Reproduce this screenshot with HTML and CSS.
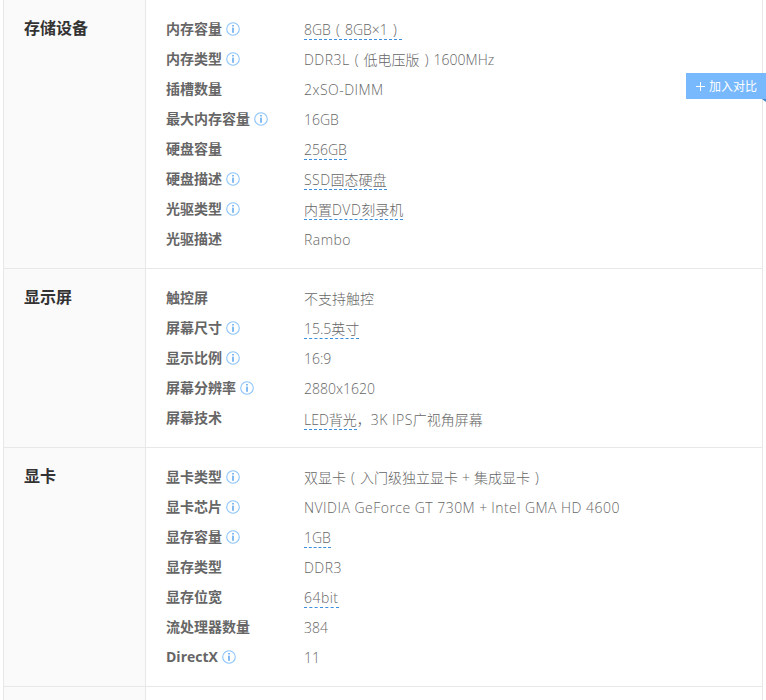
FILE: index.html
```html
<!DOCTYPE html>
<html lang="zh">
<head>
<meta charset="utf-8">
<title>参数</title>
<link rel="stylesheet" href="styles.css">
</head>
<body>
<svg class="defs" width="0" height="0"><symbol id="info" viewBox="0 0 14 14"><circle cx="7" cy="7" r="6.3" fill="none" stroke="#8cc4fb" stroke-width="1.1"/><rect x="6.3" y="3" width="1.4" height="1.5" fill="#4d9fef"/><rect x="6.3" y="5.6" width="1.4" height="5.2" fill="#4d9fef"/></symbol></svg>
<main class="table">
  <section class="group">
    <h2 class="title">存储设备</h2>
    <dl class="rows">
      <div class="row"><dt>内存容量<svg class="i"><use href="#info"/></svg></dt><dd><span class="link">8GB<span class="pa">(</span>8GB×1<span class="pa">)</span></span></dd></div>
      <div class="row"><dt>内存类型<svg class="i"><use href="#info"/></svg></dt><dd><span class="w">DDR3L</span><span class="pa">(</span>低电压版<span class="pa">)</span>1600MHz</dd></div>
      <div class="row"><dt>插槽数量</dt><dd><span class="w">2xSO-DIMM</span></dd></div>
      <div class="row"><dt>最大内存容量<svg class="i"><use href="#info"/></svg></dt><dd>16GB</dd></div>
      <div class="row"><dt>硬盘容量</dt><dd><span class="link">256GB</span></dd></div>
      <div class="row"><dt>硬盘描述<svg class="i"><use href="#info"/></svg></dt><dd><span class="link"><span class="w">SSD</span>固态硬盘</span></dd></div>
      <div class="row"><dt>光驱类型<svg class="i"><use href="#info"/></svg></dt><dd><span class="link">内置<span class="w">DVD</span>刻录机</span></dd></div>
      <div class="row"><dt>光驱描述</dt><dd><span class="w">Rambo</span></dd></div>
    </dl>
  </section>
  <section class="group">
    <h2 class="title">显示屏</h2>
    <dl class="rows">
      <div class="row"><dt>触控屏</dt><dd>不支持触控</dd></div>
      <div class="row"><dt>屏幕尺寸<svg class="i"><use href="#info"/></svg></dt><dd><span class="link">15.5英寸</span></dd></div>
      <div class="row"><dt>显示比例<svg class="i"><use href="#info"/></svg></dt><dd>16:9</dd></div>
      <div class="row"><dt>屏幕分辨率<svg class="i"><use href="#info"/></svg></dt><dd>2880x1620</dd></div>
      <div class="row"><dt>屏幕技术</dt><dd><span class="link">LED背光</span><span class="fw">，</span><span class="w">3K IPS</span>广视角屏幕</dd></div>
    </dl>
  </section>
  <section class="group">
    <h2 class="title">显卡</h2>
    <dl class="rows">
      <div class="row"><dt>显卡类型<svg class="i"><use href="#info"/></svg></dt><dd>双显卡<span class="pa">(</span>入门级独立显卡<span class="pl">+</span>集成显卡<span class="pa">)</span></dd></div>
      <div class="row"><dt>显卡芯片<svg class="i"><use href="#info"/></svg></dt><dd><span class="w">NVIDIA GeForce GT 730M</span><span class="pl">+</span><span class="w">Intel GMA HD 4600</span></dd></div>
      <div class="row"><dt>显存容量<svg class="i"><use href="#info"/></svg></dt><dd><span class="link">1GB</span></dd></div>
      <div class="row"><dt>显存类型</dt><dd><span class="w">DDR3</span></dd></div>
      <div class="row"><dt>显存位宽</dt><dd><span class="link"><span class="w">64bit</span></span></dd></div>
      <div class="row"><dt>流处理器数量</dt><dd>384</dd></div>
      <div class="row"><dt>DirectX<svg class="i"><use href="#info"/></svg></dt><dd>11</dd></div>
    </dl>
  </section>
  <section class="group"><div class="title"></div><div class="rows"></div></section>
</main>
<button class="compare" type="button"><svg class="plus" viewBox="0 0 9 9"><path d="M4.5 0V9M0 4.5H9" stroke="#fff" stroke-width="1" fill="none"/></svg>加入对比</button>
</body>
</html>
```
FILE: styles.css
```css
html, body { margin: 0; padding: 0; height: 700px; overflow: hidden; background: #fff; }
body { font-family: "Open Sans", "Noto Sans CJK SC", sans-serif; color: #666; }
.defs { position: absolute; }
.table { width: 758px; margin: 0 0 0 3px; border-left: 1px solid #e8e8e8; border-right: 1px solid #e8e8e8; }
.group { display: flex; border-bottom: 1px solid #e8e8e8; }
.title { width: 121px; flex: none; margin: 0; padding: 13px 0 0 20px; background: #fafafa; border-right: 1px solid #e8e8e8; font-size: 16px; line-height: 28px; font-weight: 700; color: #333; font-family: "Noto Sans CJK SC", sans-serif; }
.rows { flex: 1; margin: 0; padding: 14px 0 14px 20px; }
.row { display: flex; height: 30px; align-items: flex-start; }
dt { width: 138px; flex: none; display: flex; align-items: flex-start; padding-top: 5px; font-size: 14px; line-height: 20px; font-weight: 700; color: #666; }
dd { margin: 0; padding-top: 6px; font-size: 14px; line-height: 20px; font-weight: 300; color: #666; }
.w { letter-spacing: .47px; }
.fw { font-family: "Noto Sans CJK TC", sans-serif; }
.pa { display: inline-block; width: 14px; text-align: center; }
.pl { margin: 0 4px; }
.i { width: 14px; height: 14px; margin: 3px 0 0 4px; }
.link { display: inline-block; line-height: 19px; border-bottom: 1px dashed #3b8fdc; }
.compare { position: absolute; left: 686px; top: 73px; width: 80px; height: 26px; padding: 0 0 0 10px; border: 0; background: #78b8fc; color: #fff; font: 12px/26px "Noto Sans CJK SC", sans-serif; display: flex; align-items: center; gap: 4px; }
.compare::after { content: ""; position: absolute; right: 0; top: 100%; border-top: 3px solid #4a86c8; border-left: 4px solid transparent; }
.plus { width: 9px; height: 9px; flex: none; }
```
